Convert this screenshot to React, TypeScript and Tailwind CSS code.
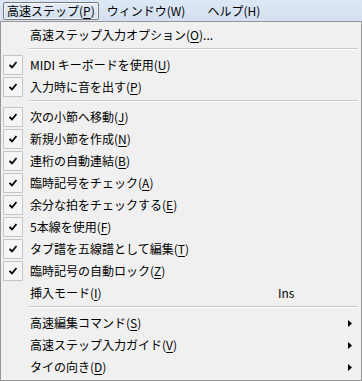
import type { ReactNode } from 'react'

type Item =
  | { kind: 'sep' }
  | { kind: 'item'; label: string; key: string; suffix?: string; checked?: boolean; accel?: string; sub?: boolean }

const ITEMS: Item[] = [
  { kind: 'item', label: '高速ステップ入力オプション', key: 'O', suffix: '...' },
  { kind: 'sep' },
  { kind: 'item', label: 'MIDI キーボードを使用', key: 'U', checked: true },
  { kind: 'item', label: '入力時に音を出す', key: 'P', checked: true },
  { kind: 'sep' },
  { kind: 'item', label: '次の小節へ移動', key: 'J', checked: true },
  { kind: 'item', label: '新規小節を作成', key: 'N', checked: true },
  { kind: 'item', label: '連桁の自動連結', key: 'B', checked: true },
  { kind: 'item', label: '臨時記号をチェック', key: 'A', checked: true },
  { kind: 'item', label: '余分な拍をチェックする', key: 'E', checked: true },
  { kind: 'item', label: '5本線を使用', key: 'F', checked: true },
  { kind: 'item', label: 'タブ譜を五線譜として編集', key: 'T', checked: true },
  { kind: 'item', label: '臨時記号の自動ロック', key: 'Z', checked: true },
  { kind: 'item', label: '挿入モード', key: 'I', accel: 'Ins' },
  { kind: 'sep' },
  { kind: 'item', label: '高速編集コマンド', key: 'S', sub: true },
  { kind: 'item', label: '高速ステップ入力ガイド', key: 'V', sub: true },
  { kind: 'item', label: 'タイの向き', key: 'D', sub: true },
]

function Label({ text, k, suffix }: { text: string; k: string; suffix?: string }) {
  return (
    <span className="whitespace-nowrap">
      {text}(<span className="underline underline-offset-2">{k}</span>){suffix}
    </span>
  )
}

function CheckBox() {
  return (
    <div className="w-[20px] h-[20px] ml-[2px] shrink-0 border border-[#c4c4c4] bg-[#f5f5f5] flex items-center justify-center">
      <svg width="8" height="8" viewBox="0 0 8 8">
        <path d="M0.5 4 L3 6.5 L7.5 1" fill="none" stroke="#000" strokeWidth="1.8" />
      </svg>
    </div>
  )
}

function Row({ it }: { it: Extract<Item, { kind: 'item' }> }) {
  return (
    <div className="h-[22px] flex items-center relative">
      {it.checked ? <CheckBox /> : <div className="w-[22px] shrink-0" />}
      <div className="ml-[7px]">
        <Label text={it.label} k={it.key} suffix={it.suffix} />
      </div>
      {it.accel && <span className="absolute left-[277px]">{it.accel}</span>}
      {it.sub && (
        <svg className="absolute left-[347px]" width="4" height="7" viewBox="0 0 4 7">
          <path d="M0 0 L4 3.5 L0 7 Z" fill="#000" />
        </svg>
      )}
    </div>
  )
}

function Sep() {
  return (
    <div className="h-[8px] pt-[2px] pl-[27px] pr-[3px]">
      <div className="h-px bg-[#c9c9c9]" />
      <div className="h-px bg-white" />
    </div>
  )
}

function BarItem({ children, active }: { children: ReactNode; active?: boolean }) {
  return (
    <div
      className={
        active
          ? 'h-[18px] px-[3px] flex items-center border border-[#7a7a7a] rounded-[2px] bg-gradient-to-b from-[#e4ecf6] to-[#d2deee] shadow-[inset_0_0_0_1px_#f4f8fc]'
          : 'h-[18px] px-[4px] flex items-center'
      }
    >
      {children}
    </div>
  )
}

export default function App() {
  return (
    <div
      className="w-[362px] h-[381px] bg-[#f0f0f0] text-[12px] text-black leading-none overflow-hidden"
      style={{ fontFamily: '"Noto Sans CJK JP", "Noto Sans", sans-serif' }}
    >
      {/* Menu bar */}
      <div className="h-[21px] bg-gradient-to-b from-[#dde8f6] to-[#d4e0f0] flex items-start pt-[2px] pl-[3px] gap-[4px]">
        <BarItem active>
          <Label text="高速ステップ" k="P" />
        </BarItem>
        <BarItem>
          <span>ウィンドウ(W)</span>
        </BarItem>
        <div className="w-[6px]" />
        <BarItem>
          <span>ヘルプ(H)</span>
        </BarItem>
      </div>

      {/* Dropdown */}
      <div className="h-[360px] border border-[#979797] pt-[2px]">
        {ITEMS.map((it, i) => (it.kind === 'sep' ? <Sep key={i} /> : <Row key={i} it={it} />))}
      </div>
    </div>
  )
}
